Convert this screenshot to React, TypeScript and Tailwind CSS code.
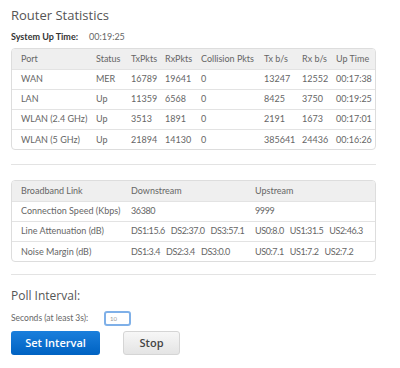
import { useState } from "react";

const ports = [
  ["WAN", "MER", "16789", "19641", "0", "13247", "12552", "00:17:38"],
  ["LAN", "Up", "11359", "6568", "0", "8425", "3750", "00:19:25"],
  ["WLAN (2.4 GHz)", "Up", "3513", "1891", "0", "2191", "1673", "00:17:01"],
  ["WLAN (5 GHz)", "Up", "21894", "14130", "0", "385641", "24436", "00:16:26"],
];

const portHeads = ["Port", "Status", "TxPkts", "RxPkts", "Collision Pkts", "Tx b/s", "Rx b/s", "Up Time"];
const portWidths = ["w-[84px]", "w-[35px]", "w-[34px]", "w-[36px]", "w-[63px]", "w-[38px]", "w-[34px]", ""];

const links = [
  ["Connection Speed (Kbps)", ["36380"], ["9999"]],
  ["Line Attenuation (dB)", ["DS1:15.6", "DS2:37.0", "DS3:57.1"], ["US0:8.0", "US1:31.5", "US2:46.3"]],
  ["Noise Margin (dB)", ["DS1:3.4", "DS2:3.4", "DS3:0.0"], ["US0:7.1", "US1:7.2", "US2:7.2"]],
] as const;

export default function App() {
  const [seconds, setSeconds] = useState("10");

  return (
    <div className="h-[368px] w-[400px] overflow-hidden bg-white pl-[11px] pr-[24px] pt-[5px] font-['Lato',sans-serif] text-[#555]">
      <h1 className="font-['Open_Sans',sans-serif] text-[13px] leading-[20px] text-[#555]">Router Statistics</h1>

      <div className="mt-[6px] flex text-[9px] leading-[12px]">
        <span className="w-[78px] font-bold text-[#333]">System Up Time:</span>
        <span className="text-[#666]">00:19:25</span>
      </div>

      <div className="mt-[5px] overflow-hidden rounded-[4px] border border-[#ddd]">
        <table className="w-full border-collapse text-[9px] text-[#666]">
          <thead>
            <tr className="h-[20px] bg-[#efefef]">
              {portHeads.map((h, i) => (
                <th key={h} className={`${portWidths[i]} whitespace-nowrap text-left font-normal ${i === 0 ? "pl-[9px]" : ""}`}>
                  {h}
                </th>
              ))}
            </tr>
          </thead>
          <tbody>
            {ports.map((row) => (
              <tr key={row[0]} className="h-[20px] border-t border-[#e3e3e3]">
                {row.map((c, i) => (
                  <td key={i} className={`whitespace-nowrap ${i === 0 ? "pl-[9px]" : ""}`}>
                    {c}
                  </td>
                ))}
              </tr>
            ))}
          </tbody>
        </table>
      </div>

      <div className="mt-[14px] h-px bg-[#e3e3e3]" />

      <div className="mt-[15px] overflow-hidden rounded-[4px] border border-[#ddd]">
        <table className="w-full border-collapse text-[9px] text-[#666]">
          <thead>
            <tr className="h-[20px] bg-[#efefef]">
              <th className="w-[119px] pl-[9px] text-left font-normal">Broadband Link</th>
              <th className="w-[124px] text-left font-normal">Downstream</th>
              <th className="text-left font-normal">Upstream</th>
            </tr>
          </thead>
          <tbody>
            {links.map(([label, ds, us]) => (
              <tr key={label} className="h-[20px] border-t border-[#e3e3e3]">
                <td className="whitespace-nowrap pl-[9px]">{label}</td>
                <td className="whitespace-nowrap">
                  <span className="flex gap-[6px] tracking-[-0.4px]">
                    {ds.map((d) => (
                      <span key={d}>{d}</span>
                    ))}
                  </span>
                </td>
                <td className="whitespace-nowrap">
                  <span className="flex gap-[6px] tracking-[-0.4px]">
                    {us.map((u) => (
                      <span key={u}>{u}</span>
                    ))}
                  </span>
                </td>
              </tr>
            ))}
          </tbody>
        </table>
      </div>

      <div className="mt-[12px] h-px bg-[#e3e3e3]" />

      <h2 className="mt-[12px] font-['Open_Sans',sans-serif] text-[12px] leading-[18px] text-[#555]">Poll Interval:</h2>

      <div className="mt-[6px] flex items-center text-[8.5px] text-[#666]">
        <span className="w-[93px]">Seconds (at least 3s):</span>
        <input
          title="Seconds"
          value={seconds}
          onChange={(e) => setSeconds(e.target.value)}
          className="h-[15px] w-[27px] rounded-[3px] border-2 border-[#7fb0e8] px-[4px] text-[6px] text-[#999] outline-none"
        />
      </div>

      <div className="mt-[5px] flex items-center gap-[23px]">
        <button className="h-[24px] w-[89px] rounded-[3px] bg-gradient-to-b from-[#1a7fdc] to-[#0062c2] font-['Open_Sans',sans-serif] text-[11px] font-semibold text-white">
          Set Interval
        </button>
        <button className="h-[24px] w-[57px] rounded-[3px] border border-[#d5d5d5] bg-gradient-to-b from-[#f7f7f7] to-[#e4e4e4] font-['Open_Sans',sans-serif] text-[11px] font-semibold text-[#444]">
          Stop
        </button>
      </div>
    </div>
  );
}
